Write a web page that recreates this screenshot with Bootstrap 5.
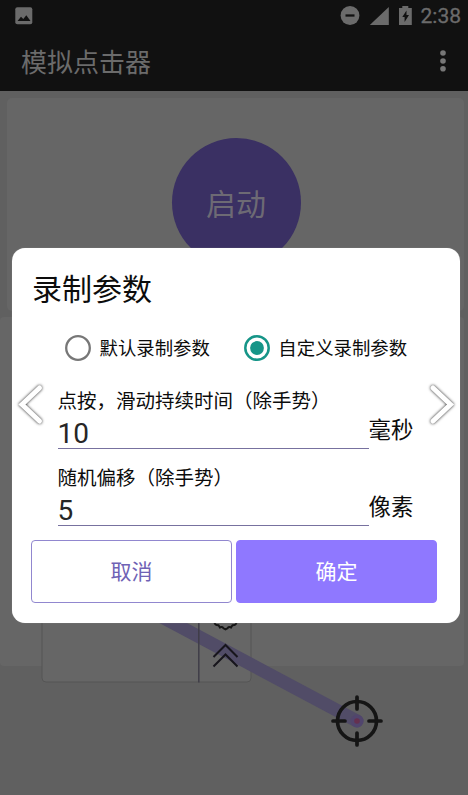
<!DOCTYPE html>
<html lang="zh-CN">
<head>
<meta charset="utf-8">
<meta name="viewport" content="width=device-width, initial-scale=1">
<title>模拟点击器</title>
<link href="https://cdn.jsdelivr.net/npm/bootstrap@5.3.0/dist/css/bootstrap.min.css" rel="stylesheet">
<style>
body{font-family:Roboto,"Noto Sans CJK SC",sans-serif;background:#606060;color:#0c0c0c}
.screen{width:468px;height:795px}
.appbar{height:91px;background:#111;color:#6b6b6b}
.status{height:31px;padding:0 7px 0 15px}
.clock{font-size:21px;line-height:31px;margin-left:9px;padding-top:1px;-webkit-text-stroke:.3px}
.toolbar{height:60px;padding:0 21px 0 21px}
.app-title{font-size:26px;line-height:60px;padding-top:3px}
.panel{background:#666}
.panel-start{margin:7px 4px 0 7px;height:213px;border-radius:5px;padding:40px 0 0 1px}
.panel-list{margin:6px 4px 0 0;height:349px;border-radius:4px}
.start{width:129px;height:129px;background:#3a3063;color:#6d6a74;font-size:30px;padding-top:4px}
.scene{z-index:1}
.overlay{z-index:2;padding:248px 8px 0 12px}
.dialog-box{height:374.5px;background:#fff;border-radius:13px;padding:0 23px 0 19px;box-shadow:0 0 1px #999}
.dialog-title{font-size:30px;line-height:40px;padding:22px 0 0 1px}
.choices{margin:24px 0 0 34px;height:28px;font-size:18.4px;line-height:28px}
.choice{gap:8.500px}
.choice + .choice{margin-left:34px}
.choice span{padding-top:1px}
.field{margin-left:26.5px;height:77px}
.field-label{font-size:19.5px;line-height:28px;height:28px;padding-top:2px}
.field-input{width:311px;height:35px;border:0;border-bottom:1.5px solid #77719f;font-size:28px;line-height:32px;color:#262626;padding:4px 0 0 0;background:none;outline:0;border-radius:0}
.unit{font-size:22.4px;line-height:28px;padding-bottom:3px}
.act{height:63px;width:201px;font-size:21px;border-radius:4px;border:1.5px solid #9187cf}
.act span{display:block;padding-top:3px}
.act-cancel{color:#6f62b5}
.act-ok{background:#8f78ff;border-color:#8f78ff;color:#fff}
.arrow{z-index:3;top:376px;filter:drop-shadow(0 0 1.5px rgba(0,0,0,.9))}
.arrow-l{left:10px}
.arrow-r{left:422px}
</style>
</head>
<body>
<div class="screen position-relative overflow-hidden">
  <header class="appbar">
    <div class="status d-flex align-items-center">
      <svg width="18" height="18" viewBox="0 0 18 18"><rect x=".3" y=".3" width="17" height="17" rx="2" fill="#6b6b6b"/><path d="M2.500 14 6 9.800 8.300 12 11.300 8.300 15.500 14z" fill="#111"/></svg>
      <svg class="ms-auto" width="74" height="22" viewBox="338 4 74 22" fill="#6b6b6b"><circle cx="350" cy="14.500" r="9.400"/><path d="M345.500 14.500h9" stroke="#111" stroke-width="2.300"/><path d="M388.800 6v18h-19z"/><path d="M399 7h3.300V5h6v2h3.500v17H399z"/><path d="m406.500 9.500-4.200 6.500h2.300v5l4.400-7h-2.500z" fill="#111"/></svg>
      <span class="clock">2:38</span>
    </div>
    <div class="toolbar d-flex align-items-center justify-content-between">
      <div class="app-title">模拟点击器</div>
      <svg width="8" height="24" viewBox="0 0 8 24" fill="#777"><circle cx="4" cy="4" r="2.800"/><circle cx="4" cy="12" r="2.800"/><circle cx="4" cy="19.800" r="2.800"/></svg>
    </div>
  </header>
  <main>
    <section class="panel panel-start d-flex justify-content-center align-items-start">
      <div class="start rounded-circle d-flex justify-content-center align-items-center">启动</div>
    </section>
    <section class="panel panel-list"></section>
  </main>
  <svg class="scene position-absolute top-0 start-0" width="468" height="795" viewBox="0 0 468 795" fill="none">
    <path d="M42 600v78q0 4 4 4h201q4 0 4-4v-78z" fill="#666" stroke="#555"/>
    <path d="M130 600 357 721" stroke="#514c67" stroke-width="13" stroke-linecap="round"/>
    <path d="M198.800 600v82.500" stroke="#3f3d48" stroke-width="1.500"/>
    <path d="M214.500 623q1 2.500 4 2.300l1.500 2.200q2-1.500 3.500.8l2 1.100 2-1.100q1.500-2.300 3.500-.8l1.500-2.200q3 .2 4-2.300" stroke="#151515" stroke-width="2"/>
    <path d="m213.500 657 12-12 12 12m-24 9.500 12-12 12 12" stroke="#17151c" stroke-width="2"/>
    <circle cx="357" cy="721" r="6.500" fill="#51456d"/>
    <circle cx="357" cy="721" r="2.800" fill="#65304f"/>
    <circle cx="357" cy="721" r="19.500" stroke="#151515" stroke-width="3.700"/>
    <path d="M357 697v12m0 24v12m-24-24h12m24 0h12" stroke="#151515" stroke-width="3.700" stroke-linecap="round"/>
  </svg>
  <div class="overlay position-absolute top-0 start-0 w-100">
    <div class="dialog-box" role="dialog">
      <div class="dialog-title">录制参数</div>
      <div class="choices d-flex align-items-center">
        <div class="choice d-flex align-items-center"><svg width="26" height="26" viewBox="0 0 26 26"><circle cx="13" cy="13" r="11.800" fill="none" stroke="#777" stroke-width="2.300"/></svg><span>默认录制参数</span></div>
        <div class="choice d-flex align-items-center"><svg width="26" height="26" viewBox="0 0 26 26"><circle cx="13" cy="13" r="11.700" fill="none" stroke="#169588" stroke-width="2.500"/><circle cx="13" cy="13" r="6.900" fill="#169588"/></svg><span>自定义录制参数</span></div>
      </div>
      <div class="pt-4">
        <div class="field">
          <div class="field-label">点按，滑动持续时间（除手势）</div>
          <div class="d-flex align-items-center"><input class="field-input" value="10"><span class="unit">毫秒</span></div>
        </div>
        <div class="field">
          <div class="field-label">随机偏移（除手势）</div>
          <div class="d-flex align-items-center"><input class="field-input" value="5"><span class="unit">像素</span></div>
        </div>
      </div>
      <div class="d-flex gap-1">
        <button class="btn act act-cancel p-0"><span>取消</span></button>
        <button class="btn act act-ok p-0"><span>确定</span></button>
      </div>
    </div>
  </div>
  <svg class="arrow arrow-l position-absolute" width="44" height="56" viewBox="0 0 44 56"><path d="M29.500 12 12 28.500 29.500 45" fill="none" stroke="#fff" stroke-width="5" stroke-linecap="round"/></svg>
  <svg class="arrow arrow-r position-absolute" width="44" height="56" viewBox="0 0 44 56"><path d="M11 12 28.500 28.500 11 45" fill="none" stroke="#fff" stroke-width="5" stroke-linecap="round"/></svg>
</div>
<script src="https://cdn.jsdelivr.net/npm/bootstrap@5.3.0/dist/js/bootstrap.bundle.min.js"></script>
</body>
</html>
